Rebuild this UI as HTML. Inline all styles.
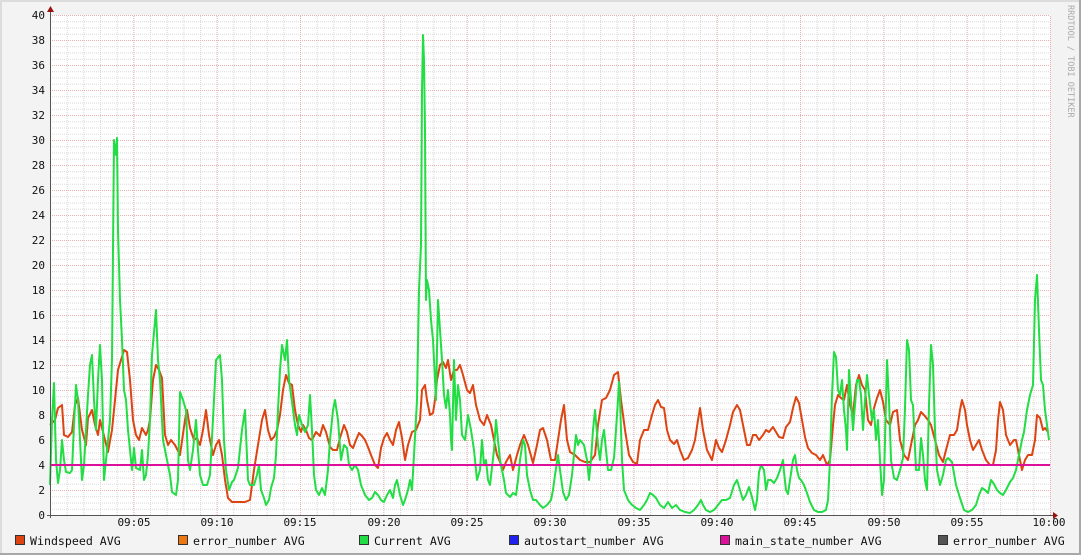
<!DOCTYPE html>
<html><head><meta charset="utf-8"><style>
html,body{margin:0;padding:0;background:#f3f3f3;}
body{width:1081px;height:555px;overflow:hidden;}
svg{display:block}
text{font-family:"DejaVu Sans Mono","Liberation Mono",monospace;}
</style></head><body>
<svg width="1081" height="555" xmlns="http://www.w3.org/2000/svg">
<defs>
<pattern id="minV" x="50" y="0" width="16.6667" height="10" patternUnits="userSpaceOnUse">
<line x1="0.5" y1="0" x2="0.5" y2="10" stroke="#d8d8d8" stroke-width="1" stroke-dasharray="1,1"/>
</pattern>
<pattern id="minH" x="0" y="15" width="10" height="6.25" patternUnits="userSpaceOnUse">
<line x1="0" y1="0.5" x2="10" y2="0.5" stroke="#d8d8d8" stroke-width="1" stroke-dasharray="1,1"/>
</pattern>
<pattern id="majV" x="50" y="0" width="83.333" height="10" patternUnits="userSpaceOnUse">
<line x1="0.5" y1="0" x2="0.5" y2="10" stroke="#e8b0b0" stroke-width="1" stroke-dasharray="1,1"/>
</pattern>
<pattern id="majH" x="0" y="15" width="10" height="25" patternUnits="userSpaceOnUse">
<line x1="0" y1="0.5" x2="10" y2="0.5" stroke="#e8b0b0" stroke-width="1" stroke-dasharray="1,1"/>
</pattern>
</defs>
<rect x="0" y="0" width="1081" height="555" fill="#f3f3f3"/>
<rect x="0" y="0" width="1081" height="2" fill="#dcdcdc"/>
<rect x="0" y="0" width="2" height="555" fill="#dcdcdc"/>
<rect x="1079" y="0" width="2" height="555" fill="#a8a8a8"/>
<rect x="0" y="553" width="1081" height="2" fill="#a8a8a8"/>
<rect x="50" y="15" width="1000" height="500" fill="#ffffff"/>
<rect x="50" y="15" width="1001" height="500" fill="url(#minV)"/>
<rect x="50" y="15" width="1000" height="500" fill="url(#minH)"/>
<rect x="50" y="15" width="1001" height="500" fill="url(#majV)"/>
<rect x="50" y="15" width="1000" height="500" fill="url(#majH)"/>

<!-- red windspeed -->
<polyline fill="none" stroke="#dd4411" stroke-width="2" stroke-linejoin="round" points="50,425 55,420 58,408 62,405 64,435 68,437 72,432 75,405 78,398 82,430 86,445 88,418 92,410 95,425 98,435 100,420 105,440 108,452 112,430 115,400 118,370 121,360 124,350 127,352 130,380 133,420 136,435 139,440 142,428 146,435 148,430 150,420 153,380 156,365 159,370 162,378 165,435 168,445 171,440 175,445 180,455 185,420 187,410 190,428 194,440 197,438 200,445 203,430 206,410 209,435 213,455 216,445 219,440 222,455 225,480 228,498 232,502 236,502 240,502 245,502 250,500 254,470 258,445 262,420 265,410 268,430 271,440 274,437 277,430 280,415 283,390 286,375 289,383 292,385 295,410 298,425 301,432 303,425 306,430 309,438 312,440 316,432 320,436 323,425 326,432 330,447 333,450 337,450 340,438 344,425 347,432 350,445 353,448 356,440 359,433 362,436 365,440 368,447 371,455 375,465 378,468 381,448 384,438 387,433 390,440 393,445 396,430 399,422 402,438 405,460 408,445 412,432 416,430 420,420 422,390 425,385 427,400 430,415 433,413 435,400 437,380 440,365 443,362 446,368 448,360 451,380 454,370 457,370 460,365 463,375 467,390 470,393 473,385 476,405 480,420 484,425 487,415 491,425 494,440 497,455 500,462 503,470 506,462 510,455 513,470 517,455 520,445 524,435 528,445 533,463 537,445 540,430 543,428 547,440 551,460 555,460 558,440 561,420 564,405 567,440 570,452 575,455 580,460 585,462 590,462 595,455 598,425 602,400 606,398 610,390 614,375 618,372 621,400 625,430 629,455 633,462 637,464 640,440 644,430 648,430 652,415 655,405 658,400 661,407 664,408 667,430 670,440 674,444 677,440 680,450 684,460 688,458 692,450 695,440 698,420 700,408 703,430 707,450 712,460 716,440 719,448 722,452 726,440 730,425 733,412 737,405 740,410 744,430 747,445 750,445 753,435 756,435 759,440 763,435 766,430 769,432 773,427 776,432 779,437 783,438 786,427 790,422 793,408 796,397 799,403 802,420 805,437 808,448 812,453 816,455 820,460 823,455 827,465 830,460 833,425 835,405 838,395 841,398 844,400 847,385 850,405 853,415 856,385 859,375 862,385 865,390 868,420 871,425 874,408 877,398 880,390 883,402 886,420 890,425 893,412 897,410 900,440 904,455 908,460 912,440 915,425 918,420 921,412 924,415 928,420 931,425 935,440 939,455 943,462 946,450 950,435 954,435 957,430 960,410 962,400 965,410 967,425 970,440 973,450 976,445 979,440 982,450 986,460 990,465 993,465 996,450 998,420 1000,402 1003,410 1006,435 1010,445 1014,440 1016,440 1019,455 1022,470 1025,460 1028,455 1032,455 1035,440 1037,415 1040,418 1043,430 1045,428 1048,432"/>
<!-- green current -->
<polyline fill="none" stroke="#22dd44" stroke-width="2" stroke-linejoin="round" points="50,485 52,420 54,383 56,460 58,483 60,470 62,440 64,460 66,472 70,473 72,470 74,425 76,385 78,400 80,440 82,480 84,465 86,430 88,395 90,365 92,355 94,400 96,430 98,380 100,345 102,380 104,480 106,460 108,440 110,420 112,360 114,140 116,155 117,138 118,230 120,300 122,340 124,390 126,400 128,430 132,470 134,448 136,468 140,470 142,450 144,480 146,475 148,455 150,420 152,355 156,310 158,360 160,380 163,440 166,455 170,475 172,492 176,495 178,480 180,392 183,400 186,410 188,460 190,470 193,450 196,420 198,450 200,475 203,485 207,485 210,475 214,400 216,360 220,355 222,380 224,440 226,470 229,490 232,482 234,480 238,468 242,430 245,410 248,480 250,485 254,485 257,475 259,465 261,490 264,498 266,505 269,500 271,488 274,478 276,455 278,410 280,370 282,345 285,360 287,340 289,380 292,402 295,425 297,435 299,415 302,425 305,432 308,425 310,395 312,430 314,475 316,490 319,495 322,488 325,495 328,470 330,440 333,410 335,400 338,420 341,460 344,445 347,448 349,465 352,470 355,465 358,470 361,485 365,495 369,500 372,498 375,492 378,495 381,500 384,502 387,495 390,490 393,498 395,485 397,480 400,495 403,505 405,500 408,490 410,480 412,490 414,455 417,400 419,290 421,245 422,90 423,35 424,60 425,130 426,300 427,280 429,290 431,320 433,340 436,400 438,300 440,330 442,360 444,395 446,408 448,390 450,415 451,440 452,450 454,360 456,420 458,385 460,400 462,435 465,440 468,415 471,430 474,450 477,480 480,470 482,440 484,465 486,460 488,480 490,485 494,450 496,420 498,440 500,460 502,470 504,480 506,493 510,497 513,493 516,495 518,480 520,460 523,440 525,445 527,475 530,490 533,500 536,500 540,505 543,508 547,505 551,500 553,490 555,475 558,455 560,470 563,492 566,500 569,495 572,475 574,455 576,435 578,445 580,440 584,445 587,460 589,480 591,460 593,430 595,410 598,445 600,460 602,440 604,430 606,450 608,470 611,470 614,458 616,430 618,400 619,382 620,400 622,460 624,490 628,500 632,505 636,508 640,510 644,505 647,500 650,493 653,495 656,498 660,505 664,508 668,502 672,508 676,505 680,510 685,512 690,513 694,510 698,505 701,500 703,505 706,510 710,512 714,510 718,505 722,500 726,500 730,498 734,485 737,480 740,490 743,500 746,495 749,487 752,497 755,510 757,500 759,472 761,465 764,470 766,490 768,480 771,480 774,483 777,478 780,470 783,460 784,472 786,490 788,494 790,480 793,460 795,455 797,470 799,478 801,480 804,485 807,493 810,502 814,510 818,512 822,512 826,510 828,500 830,460 832,395 834,352 836,357 838,390 840,395 842,380 844,410 846,430 847,450 849,370 851,400 853,430 855,405 857,380 859,380 861,395 863,430 865,400 867,375 869,395 872,420 874,410 876,440 878,420 880,460 882,495 884,480 887,360 889,400 891,460 894,478 897,480 900,470 903,458 905,408 907,340 909,350 911,400 913,405 916,470 919,470 921,438 923,455 925,480 927,490 929,405 931,345 933,365 935,430 937,470 940,485 943,475 946,460 948,458 952,462 956,485 960,498 964,510 968,512 972,510 976,505 979,495 982,488 985,490 988,493 991,480 994,484 997,490 1000,493 1003,495 1006,490 1010,482 1013,478 1016,470 1019,455 1022,440 1024,432 1027,410 1030,395 1033,385 1035,300 1037,275 1039,330 1041,380 1043,385 1045,410 1047,425 1049,440"/>
<line x1="50" y1="465" x2="1050" y2="465" stroke="#dd1199" stroke-width="2"/>

<line x1="50.5" y1="10" x2="50.5" y2="518" stroke="#555" stroke-width="1"/>
<line x1="47" y1="515.5" x2="1054" y2="515.5" stroke="#555" stroke-width="1"/>
<polygon points="47,12 50.5,6 54,12" fill="#991111"/>
<polygon points="1053,512 1058,515.5 1053,519" fill="#991111"/>

<g font-size="11" fill="#111" text-anchor="end">
<text x="45" y="19">40</text><text x="45" y="44">38</text><text x="45" y="69">36</text><text x="45" y="94">34</text>
<text x="45" y="119">32</text><text x="45" y="144">30</text><text x="45" y="169">28</text><text x="45" y="194">26</text>
<text x="45" y="219">24</text><text x="45" y="244">22</text><text x="45" y="269">20</text><text x="45" y="294">18</text>
<text x="45" y="319">16</text><text x="45" y="344">14</text><text x="45" y="369">12</text><text x="45" y="394">10</text>
<text x="45" y="419">8</text><text x="45" y="444">6</text><text x="45" y="469">4</text><text x="45" y="494">2</text>
<text x="45" y="519">0</text>
</g>
<g font-size="11" fill="#111" text-anchor="middle">
<text x="134" y="526">09:05</text><text x="217" y="526">09:10</text><text x="300" y="526">09:15</text>
<text x="384" y="526">09:20</text><text x="467" y="526">09:25</text><text x="550" y="526">09:30</text>
<text x="634" y="526">09:35</text><text x="717" y="526">09:40</text><text x="800" y="526">09:45</text>
<text x="884" y="526">09:50</text><text x="967" y="526">09:55</text><text x="1049" y="526">10:00</text>
</g>
<text transform="translate(1068,5) rotate(90)" font-size="8.5" fill="#aaaaaa">RRDTOOL / TOBI OETIKER</text>

<g font-size="11.6" fill="#111">
<rect x="15.5" y="535.5" width="9" height="9" fill="#dd4411" stroke="#333"/><text x="30" y="545">Windspeed AVG</text>
<rect x="178.5" y="535.5" width="9" height="9" fill="#ee7711" stroke="#333"/><text x="193" y="545">error_number AVG</text>
<rect x="359.5" y="535.5" width="9" height="9" fill="#22dd44" stroke="#333"/><text x="374" y="545">Current AVG</text>
<rect x="509.5" y="535.5" width="9" height="9" fill="#2222ee" stroke="#333"/><text x="524" y="545">autostart_number AVG</text>
<rect x="720.5" y="535.5" width="9" height="9" fill="#dd1199" stroke="#333"/><text x="735" y="545">main_state_number AVG</text>
<rect x="938.5" y="535.5" width="9" height="9" fill="#555555" stroke="#333"/><text x="953" y="545">error_number AVG</text>
</g>
</svg>
</body></html>
